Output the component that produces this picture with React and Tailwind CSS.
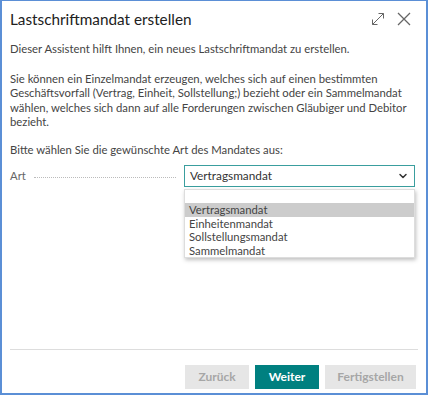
import { ChevronDown } from 'lucide-react';

const options = ['Vertragsmandat', 'Einheitenmandat', 'Sollstellungsmandat', 'Sammelmandat'];

export default function App() {
  return (
    <div className="w-[429px] h-[396px] bg-white">
      <div
        className="w-[428px] h-[395px] border-2 border-t border-[#5b8fd6] flex flex-col text-[#333333]"
        style={{ fontFamily: 'Lato, "Open Sans", sans-serif' }}
      >
        {/* header */}
        <div className="flex items-center justify-between pl-[8px] pr-[15px] pt-[4px] h-[32px]">
          <h1 className="text-[15.3px] text-[#212121]">Lastschriftmandat erstellen</h1>
          <div className="flex items-center gap-[12px] text-[#666]">
            <svg width="14" height="14" viewBox="0 0 14 14" fill="none" stroke="currentColor" strokeWidth="1">
              <path d="M1.5 12.5 L12.5 1.5 M7.5 1.5 H12.5 V6.5 M1.5 7.5 V12.5 H6.5" />
            </svg>
            <svg width="14" height="14" viewBox="0 0 14 14" fill="none" stroke="currentColor" strokeWidth="1.3">
              <path d="M1 1 L13 13 M13 1 L1 13" />
            </svg>
          </div>
        </div>

        {/* body */}
        <div className="pl-[8px] pr-[8px] text-[11.3px] leading-[14.5px] text-[#444] whitespace-nowrap">
          <p className="mt-[9px]">Dieser Assistent hilft Ihnen, ein neues Lastschriftmandat zu erstellen.</p>
          <p className="mt-[15px]">
            Sie können ein Einzelmandat erzeugen, welches sich auf einen bestimmten
            <br />
            Geschäftsvorfall (Vertrag, Einheit, Sollstellung;) bezieht oder ein Sammelmandat
            <br />
            wählen, welches sich dann auf alle Forderungen zwischen Gläubiger und Debitor
            <br />
            bezieht.
          </p>
          <p className="mt-[13px]">Bitte wählen Sie die gewünschte Art des Mandates aus:</p>

          <div className="mt-[8px] flex items-center">
            <span className="w-[24px] text-[#666]">Art</span>
            <div className="flex-1 mr-[8px] border-b border-dotted border-[#bbb] h-[1px] mt-[2px]" />
            <div className="relative w-[231px] mr-[3px]">
              <div className="h-[22px] border border-[#3a9e9e] flex items-center justify-between px-[5px] text-[11.8px] text-[#333]">
                <span>Vertragsmandat</span>
                <ChevronDown size={12} strokeWidth={3} className="text-[#333]" />
              </div>
              <ul className="absolute left-0 right-0 top-[24px] bg-white border border-[#ddd] shadow-[1px_2px_4px_rgba(0,0,0,0.25)] leading-[13.5px]">
                <li className="h-[13px]" />
                {options.map((o, i) => (
                  <li key={o} className={`px-[4px] ${i === 0 ? 'bg-[#cccccc]' : ''}`}>
                    {o}
                  </li>
                ))}
              </ul>
            </div>
          </div>
        </div>

        <div className="flex-1" />

        {/* footer */}
        <div className="mx-[8px] border-t border-[#dddddd]" />
        <div className="flex justify-end gap-[6px] pr-[10px] pt-[15px] pb-[4px] text-[12px] font-bold">
          <button className="w-[64px] h-[24px] bg-[#e6e6e6] text-[#a6a6a6]">Zurück</button>
          <button className="w-[64px] h-[24px] bg-[#008080] text-white">Weiter</button>
          <button className="w-[91px] h-[24px] bg-[#e6e6e6] text-[#a6a6a6]">Fertigstellen</button>
        </div>
      </div>
    </div>
  );
}
